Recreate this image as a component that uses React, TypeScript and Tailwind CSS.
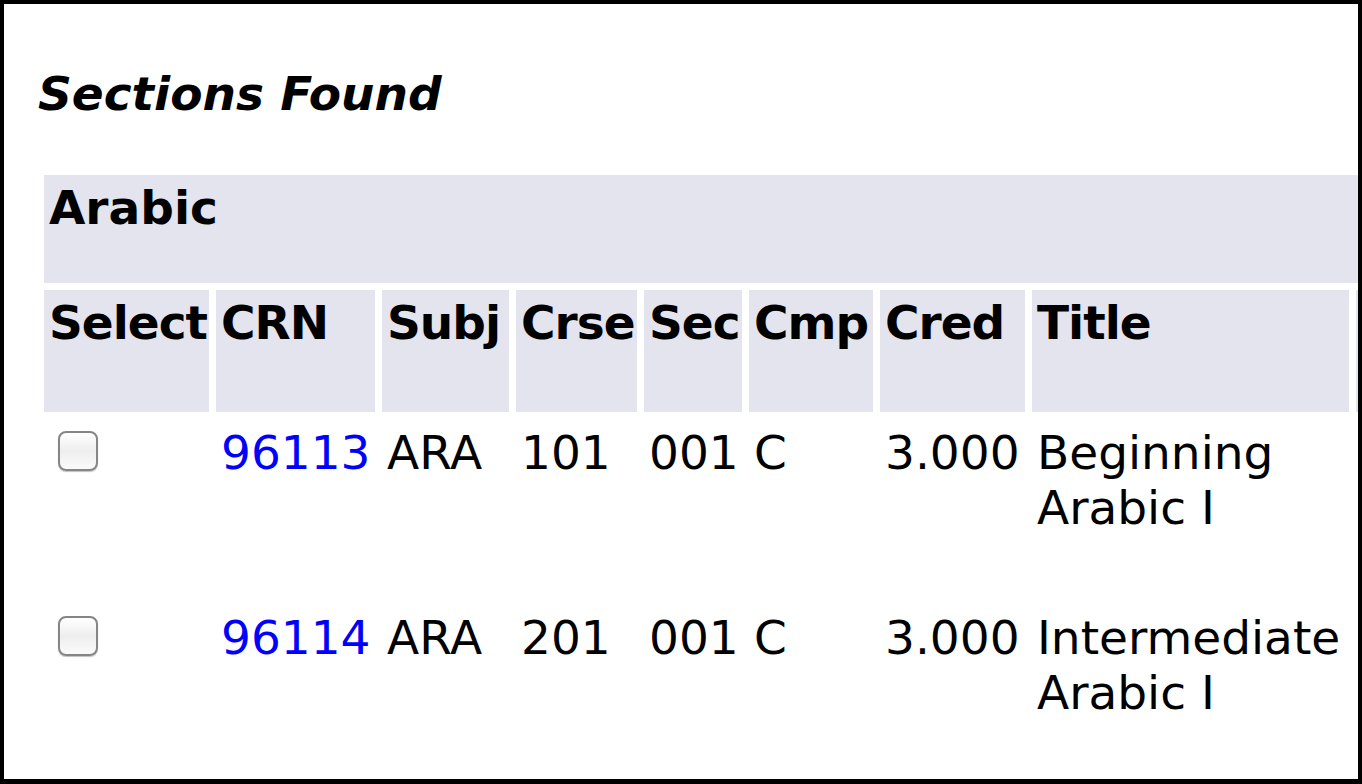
import React from "react";

const sections = [
  { crn: "96113", subj: "ARA", crse: "101", sec: "001", cmp: "C", cred: "3.000", title: "Beginning Arabic I" },
  { crn: "96114", subj: "ARA", crse: "201", sec: "001", cmp: "C", cred: "3.000", title: "Intermediate Arabic I" },
];

const headers = ["Select", "CRN", "Subj", "Crse", "Sec", "Cmp", "Cred", "Title", ""];

function FakeCheckbox() {
  return (
    <div className="ml-[9px] mt-[6px] w-[40px] h-[40px] rounded-[8px] border-2 border-[#858585] bg-gradient-to-b from-[#ffffff] via-[#eeeeee] to-[#fafafa] shadow-[0_1px_1px_rgba(0,0,0,0.25)]" />
  );
}

export default function App() {
  return (
    <div
      className="w-[1362px] h-[784px] bg-white border-black border-t-4 border-l-4 border-r-4 border-b-[5px] overflow-hidden text-black"
      style={{ fontFamily: '"DejaVu Sans", Verdana, sans-serif' }}
    >
      <div className="pl-[34px] pt-[62px]">
        <h2 className="text-[47px] leading-[55px] font-bold italic">Sections Found</h2>

        <div className="mt-[54px] ml-[6px] w-max grid gap-[7px] grid-cols-[165px_159px_127px_121px_98px_124px_145px_317px_220px] text-[47px] leading-[55px]">
          <div className="col-span-full h-[108px] bg-[#e3e4ed] px-[5px] pt-[5px] font-bold">Arabic</div>

          {headers.map((h, i) => (
            <div key={i} className="h-[122px] bg-[#e3e4ed] px-[5px] pt-[5px] font-bold tracking-[-1px]">
              {h}
            </div>
          ))}

          {sections.map((s) => (
            <React.Fragment key={s.crn}>
              <div className="h-[178px] px-[5px] pt-[6px]">
                <FakeCheckbox />
              </div>
              <div className="px-[5px] pt-[6px]">
                <a href="#" className="text-[#0000ff]">{s.crn}</a>
              </div>
              <div className="px-[5px] pt-[6px]">{s.subj}</div>
              <div className="px-[5px] pt-[6px]">{s.crse}</div>
              <div className="px-[5px] pt-[6px]">{s.sec}</div>
              <div className="px-[5px] pt-[6px]">{s.cmp}</div>
              <div className="px-[5px] pt-[6px]">{s.cred}</div>
              <div className="px-[5px] pt-[6px]">{s.title}</div>
              <div className="px-[5px] pt-[6px]"></div>
            </React.Fragment>
          ))}
        </div>
      </div>
    </div>
  );
}
